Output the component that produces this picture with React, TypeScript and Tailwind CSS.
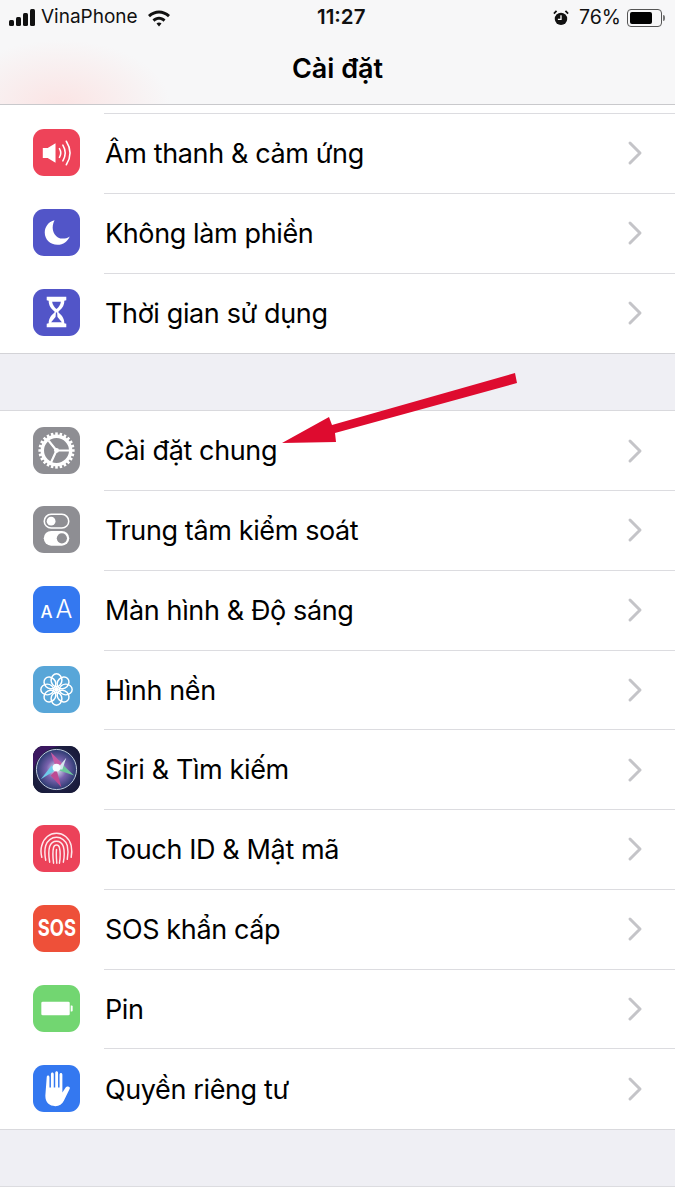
import { ChevronRight } from 'lucide-react';
import type { ReactNode } from 'react';

const fontStack = { fontFamily: 'Inter, "Noto Sans", "Liberation Sans", sans-serif' };

function SoundIcon() {
  return (
    <svg viewBox="0 0 48 48" className="w-full h-full">
      <path d="M10 19.500h5l8-5v20l-8-5h-5z" fill="#fff" />
      <path d="M27 20c1.700 2.800 1.700 6.200 0 9" stroke="#fff" strokeWidth="1.600" fill="none" strokeLinecap="round" />
      <path d="M30.500 16.500c3 5 3 11 0 16" stroke="#fff" strokeWidth="1.600" fill="none" strokeLinecap="round" />
      <path d="M34 12.500c4.800 7.500 4.800 16.500 0 24" stroke="#fff" strokeWidth="1.600" fill="none" strokeLinecap="round" />
    </svg>
  );
}

function MoonIcon() {
  return (
    <svg viewBox="0 0 48 48" className="w-full h-full">
      <path d="M22 11.500C15.500 13 12 18.500 12 24c0 7 5.500 12.500 13 12.500 6 0 10.500-3.500 12.500-8.500-3.500 2.500-8.500 3-12 1-5.500-3-7-11-3.500-17.500z" fill="#fff" />
    </svg>
  );
}

function HourglassIcon() {
  return (
    <svg viewBox="0 0 48 48" className="w-full h-full">
      <path d="M14 8h20v3.500l-2 .5c0 5.500-3 8.500-6 11v1c3 2.500 6 5.500 6 11l2 .5V39H14v-3.500l2-.5c0-5.500 3-8.500 6-11v-1c-3-2.500-6-5.500-6-11l-2-.5z" fill="#fff" />
      <path d="M19.500 13h9c-.5 3-2.500 6-4.500 7.500-2-1.500-4-4.500-4.500-7.500z" fill="#5255c8" />
      <path d="M23.400 24h1.200l.4 4.500 4.500 5.500H18.500l4.500-5.500z" fill="#5255c8" />
    </svg>
  );
}

function GearIcon() {
  const teeth = Array.from({ length: 24 }, (_, i) => i * 15);
  return (
    <svg viewBox="0 0 48 48" className="w-full h-full">
      {teeth.map((deg) => (
        <rect key={deg} x="22.700" y="5.500" width="2.600" height="5" fill="#fff" transform={`rotate(${deg} 24 24)`} />
      ))}
      <circle cx="24" cy="24" r="14.500" fill="none" stroke="#fff" strokeWidth="3.500" />
      <circle cx="24" cy="24" r="2.500" fill="#fff" />
      <path d="M24 24 16 14M24 24h14M24 24l-6 13" stroke="#fff" strokeWidth="2.200" />
    </svg>
  );
}

function SwitchesIcon() {
  return (
    <svg viewBox="0 0 48 48" className="w-full h-full">
      <rect x="11.500" y="8.500" width="25" height="14" rx="7" fill="none" stroke="#fff" strokeWidth="1.600" />
      <circle cx="18.500" cy="15.500" r="4.500" fill="#fff" />
      <rect x="11" y="25.500" width="26" height="15" rx="7.500" fill="#fff" />
      <circle cx="29.500" cy="33" r="5.200" fill="#8e8e93" />
    </svg>
  );
}

function FlowerIcon() {
  const petals = Array.from({ length: 8 }, (_, i) => i * 45);
  return (
    <svg viewBox="0 0 48 48" className="w-full h-full">
      {petals.map((deg) => (
        <ellipse
          key={deg}
          cx="24"
          cy="14.500"
          rx="5.500"
          ry="6.500"
          fill="none"
          stroke="#fff"
          strokeWidth="1.500"
          transform={`rotate(${deg} 24 24)`}
        />
      ))}
      <circle cx="24" cy="24" r="2.500" fill="#fff" />
    </svg>
  );
}

function SiriIcon() {
  return (
    <svg viewBox="0 0 48 48" className="w-full h-full">
      <defs>
        <radialGradient id="siriBg" cx="0.500" cy="0.500" r="0.700">
          <stop offset="0" stopColor="#2c2f5c" />
          <stop offset="1" stopColor="#141633" />
        </radialGradient>
        <radialGradient id="siriOrb" cx="0.500" cy="0.500" r="0.500">
          <stop offset="0" stopColor="#e8f6fa" />
          <stop offset="0.500" stopColor="#7a62ae" />
          <stop offset="1" stopColor="#2a3a70" />
        </radialGradient>
      </defs>
      <rect width="48" height="48" fill="url(#siriBg)" />
      <path d="M0 0h28C14 2 4 10 0 26z" fill="#3b1760" />
      <circle cx="24" cy="24" r="20.500" fill="url(#siriOrb)" />
      <circle cx="24" cy="24" r="20.500" fill="none" stroke="#c3cfdf" strokeWidth="1" />
      <path d="M24 24 8 34l11-14z" fill="#6fcbeb" />
      <path d="M24 24 42 30 30 19z" fill="#6cc79c" />
      <path d="M24 24 18 6l12 12z" fill="#c65aa4" />
      <path d="M24 24 29 42 18 30z" fill="#bd4a93" />
      <path d="M24 24 34 12l-4 12z" fill="#d4e6ee" />
      <circle cx="24" cy="22" r="4" fill="#f6fcff" />
    </svg>
  );
}

function FingerprintIcon() {
  const arcs = [
    'M9 33c-1-4-1-9 0-12C11 13 17 8.500 24 8.500S37 13 39 21c.8 4 .8 8 0 12',
    'M13 36c-1-5-1.500-10 0-15 1.500-5 6-8.500 11-8.500s9.500 3.500 11 8.500c1.200 5 .8 10 0 14',
    'M17 38c-1-6-1.500-11 0-16 1-3 3.500-5.500 7-5.500s6 2.500 7 5.500c1.300 5 1 11 0 16',
    'M21 39c-.8-6-1.200-11 0-16 .4-1.500 1.500-2.500 3-2.500s2.600 1 3 2.500c1.200 5 .8 11 0 16',
    'M24 25c-.5 5 0 10 .3 14',
  ];
  return (
    <svg viewBox="0 0 48 48" className="w-full h-full">
      {arcs.map((d) => (
        <path key={d} d={d} fill="none" stroke="#fde8ec" strokeWidth="1.500" strokeLinecap="round" />
      ))}
    </svg>
  );
}

function BatteryIcon() {
  return (
    <svg viewBox="0 0 48 48" className="w-full h-full">
      <rect x="8.500" y="17" width="29" height="14" rx="1.500" fill="#fff" />
      <path d="M38.500 21h1a1 1 0 0 1 1 1v4a1 1 0 0 1-1 1h-1z" fill="#fff" />
    </svg>
  );
}

function HandIcon() {
  return (
    <svg viewBox="0 0 48 48" className="w-full h-full">
      <path
        d="M14 12.500c0-2.300 2.800-2.300 2.800 0V23h1.500V9.500c0-2.300 2.900-2.300 2.900 0V23h1.500V8c0-2.300 2.900-2.300 2.900 0v15h1.500V10c0-2.300 2.900-2.300 2.900 0v18l3-4.500c1.800-2.600 5.500-1.500 4.500.8-2 4-4 8-6 12.200-1.800 3.500-4.500 5.500-8.700 5.500-6 0-10.200-3.500-10.200-10.500z"
        fill="#fff"
      />
    </svg>
  );
}

type Row = { label: string; bg: string; icon: ReactNode };

const topRows: Row[] = [
  { label: 'Âm thanh & cảm ứng', bg: 'bg-[#ee4359]', icon: <SoundIcon /> },
  { label: 'Không làm phiền', bg: 'bg-[#5255c8]', icon: <MoonIcon /> },
  { label: 'Thời gian sử dụng', bg: 'bg-[#5255c8]', icon: <HourglassIcon /> },
];

const mainRows: Row[] = [
  { label: 'Cài đặt chung', bg: 'bg-[#8e8e93]', icon: <GearIcon /> },
  { label: 'Trung tâm kiểm soát', bg: 'bg-[#8e8e93]', icon: <SwitchesIcon /> },
  {
    label: 'Màn hình & Độ sáng',
    bg: 'bg-[#3478f0]',
    icon: (
      <div className="flex items-baseline gap-[3px] text-white leading-none">
        <span className="text-[17px] font-medium">A</span>
        <span className="text-[25px] font-light">A</span>
      </div>
    ),
  },
  { label: 'Hình nền', bg: 'bg-[#58a6d8]', icon: <FlowerIcon /> },
  { label: 'Siri & Tìm kiếm', bg: 'bg-[#141633]', icon: <SiriIcon /> },
  { label: 'Touch ID & Mật mã', bg: 'bg-[#ec4259]', icon: <FingerprintIcon /> },
  {
    label: 'SOS khẩn cấp',
    bg: 'bg-[#ee5039]',
    icon: <span className="text-white font-bold text-[23px] leading-none scale-x-[0.8]">SOS</span>,
  },
  { label: 'Pin', bg: 'bg-[#72d671]', icon: <BatteryIcon /> },
  { label: 'Quyền riêng tư', bg: 'bg-[#3478f0]', icon: <HandIcon /> },
];

function SettingsRow({ row, last }: { row: Row; last: boolean }) {
  return (
    <div className="flex items-center h-[79.75px] pl-[33px]">
      <div
        className={`w-[47px] h-[47px] mb-[2px] rounded-[11px] overflow-hidden flex items-center justify-center flex-none ${row.bg}`}
      >
        {row.icon}
      </div>
      <div
        className={`ml-[24px] flex-1 h-full flex items-center justify-between pr-[20px] ${
          last ? '' : 'border-b border-[#dcdce0]'
        }`}
      >
        <span className="text-[27px] text-black tracking-[-0.38px] pt-[2px] pl-[1px]">{row.label}</span>
        <ChevronRight className="w-10 h-10 text-[#c4c4c8]" strokeWidth={1.8} />
      </div>
    </div>
  );
}

export default function App() {
  return (
    <div className="relative w-[675px] h-[1200px] bg-white overflow-hidden" style={fontStack}>
      <div className="relative h-[105px] bg-[#f7f7f8] border-b border-[#c9c9cc] overflow-hidden">
        <div className="absolute -left-[50px] top-[40px] w-[220px] h-[130px] rounded-full bg-[radial-gradient(closest-side,#fbe4e4,#f7f7f8)]" />
        <div className="relative flex items-center justify-between h-[35px] pl-[9px] pr-[10px] text-[#111]">
          <div className="flex items-center">
            <svg viewBox="0 0 26 18" className="w-[26px] h-[18px]">
              <rect x="0" y="11" width="5" height="6" rx="1.500" fill="#111" />
              <rect x="7" y="8" width="5" height="9" rx="1.500" fill="#111" />
              <rect x="14" y="4" width="5" height="13" rx="1.500" fill="#111" />
              <rect x="21" y="0" width="5" height="17" rx="1.500" fill="#111" />
            </svg>
            <span className="ml-[6px] text-[19px]">VinaPhone</span>
            <svg viewBox="0 0 24 18" className="w-[24px] h-[18px] ml-[9px]">
              <path d="M1 6c6.500-6 15.500-6 22 0l-2 2.200c-5.500-4.800-12.500-4.800-18 0z" fill="#111" />
              <path d="M5.500 10.500c4-3.700 9-3.700 13 0l-2 2.200c-3-2.500-6-2.500-9 0z" fill="#111" />
              <path d="M9.500 14.500c1.500-1.300 3.500-1.300 5 0L12 17.500z" fill="#111" />
            </svg>
          </div>
          <span className="absolute left-[317px] text-[20.5px] font-semibold">11:27</span>
          <div className="flex items-center">
            <svg viewBox="0 0 18 18" className="w-[16px] h-[16px]">
              <circle cx="9" cy="10" r="7" fill="#111" />
              <path d="M9 6v4.500H5.500" stroke="#fff" strokeWidth="1.500" fill="none" />
              <path d="M1 4l3-3M17 4l-3-3" stroke="#111" strokeWidth="2" />
            </svg>
            <span className="ml-[10px] text-[19.5px]">76%</span>
            <div className="ml-[6px] w-[35px] h-[18px] rounded-[4px] border border-[#555] p-[2px]">
              <div className="w-[76%] h-full rounded-[2px] bg-black" />
            </div>
            <div className="w-[2px] h-[6px] ml-[1px] rounded-r-sm bg-[#777]" />
          </div>
        </div>
        <div className="relative flex items-center justify-center h-[67px] pt-[2px] text-[27px] font-semibold text-black">
          Cài đặt
        </div>
      </div>

      <div className="h-[8px] bg-white" />
      <div className="ml-[104px] border-t border-[#dcdce0]" />
      <div className="border-b border-[#d3d3d7]">
        {topRows.map((row, i) => (
          <SettingsRow key={row.label} row={row} last={i === topRows.length - 1} />
        ))}
      </div>

      <div className="h-[56px] bg-[#efeff4]" />

      <div className="border-y border-[#d9d9dd]">
        {mainRows.map((row, i) => (
          <SettingsRow key={row.label} row={row} last={i === mainRows.length - 1} />
        ))}
      </div>

      <div className="h-[57px] bg-[#efeff4] border-b border-[#dcdce0]" />

      {/* annotation drawn over the list */}
      <svg viewBox="0 0 675 1200" className="absolute inset-0 w-[675px] h-[1200px] pointer-events-none">
        <path d="M515 373 517 383 335 433 336 442 282 443 329 417 332 425z" fill="#de0b2f" />
      </svg>
    </div>
  );
}
